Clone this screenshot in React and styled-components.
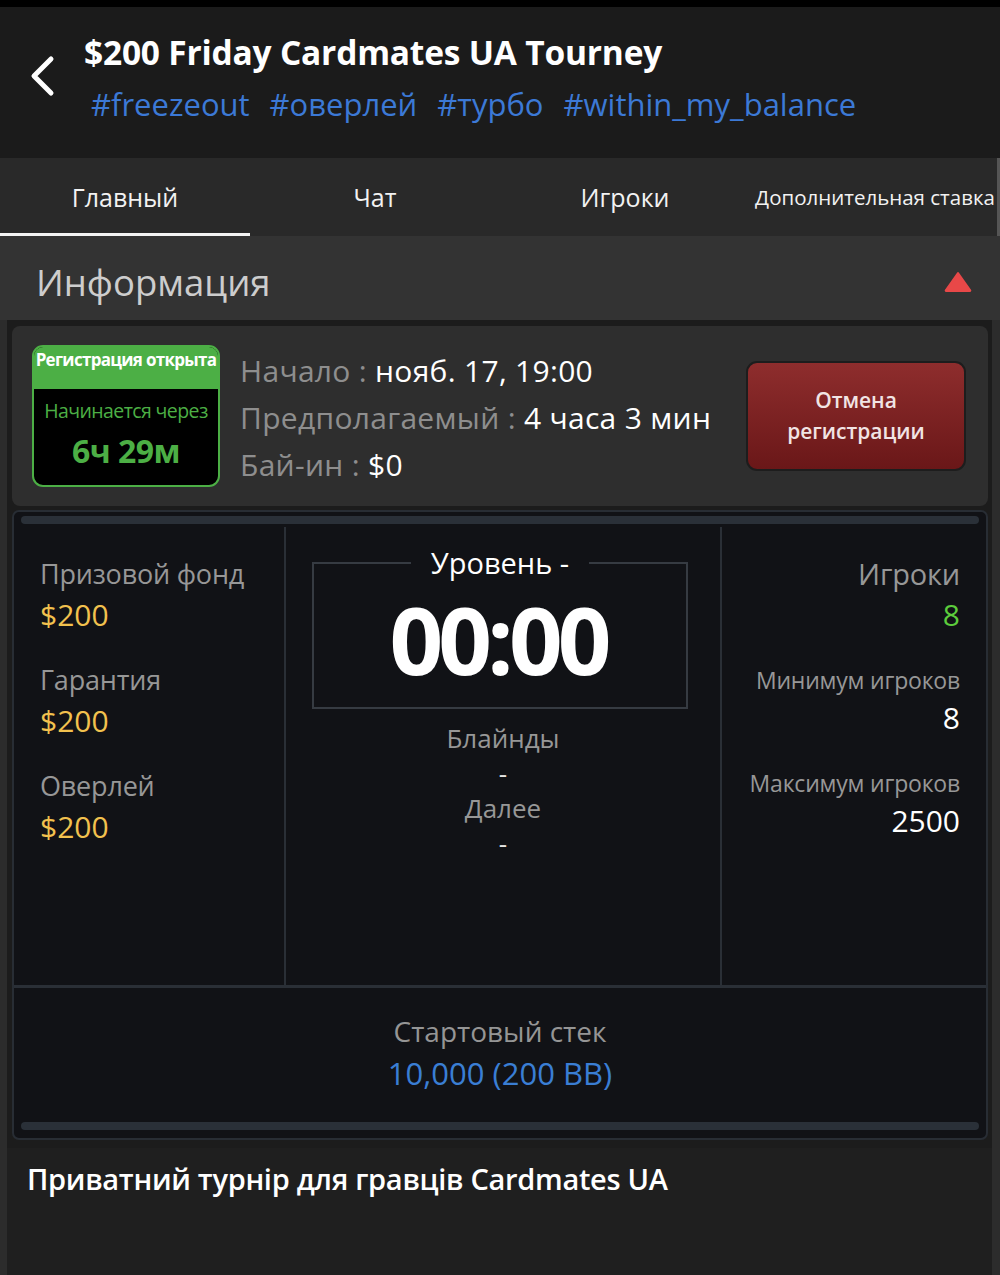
import React from "react";
import styled, { createGlobalStyle } from "styled-components";

const Global = createGlobalStyle`
  html, body {
    margin: 0;
    padding: 0;
    background: #2c2c2c;
  }
  body {
    font-family: "Open Sans", "Noto Sans", sans-serif;
    color: #fff;
  }
`

const Page = styled.div`
  width: 1000px;
  min-height: 1275px;
  background: #2c2c2c;
  display: flex;
  flex-direction: column;
`

const StatusStrip = styled.div`
  height: 7px;
  background: #000;
`

const Header = styled.header`
  height: 151px;
  background: #1b1b1b;
  display: flex;
  align-items: center;
  padding-left: 22px;
  box-sizing: border-box;
`

const Back = styled.button`
  width: 40px;
  height: 50px;
  background: none;
  border: none;
  padding: 0;
  margin-top: -14px;
  display: flex;
  align-items: center;
  justify-content: center;
`

const HeadText = styled.div`
  display: flex;
  flex-direction: column;
  margin-left: 22px;
  margin-top: -12px;
`

const Title = styled.h1`
  margin: 0;
  font-size: 33.5px;
  font-weight: 700;
  line-height: 44px;
  letter-spacing: -0.2px;
  color: #fff;
`

const Tags = styled.div`
  display: flex;
  gap: 20px;
  margin-left: 7px;
  margin-top: 10px;
`

const Tag = styled.span`
  font-size: 31px;
  line-height: 40px;
  color: #3c79d6;
`

const Tabs = styled.nav`
  height: 78px;
  background: #292929;
  display: grid;
  grid-template-columns: repeat(4, 250px);
  border-right: 3px solid #555;
  box-sizing: border-box;
`

const Tab = styled.div`
  display: flex;
  align-items: center;
  justify-content: center;
  font-size: ${p => (p.$small ? "20.5px" : "25px")};
  white-space: nowrap;
  color: #f2f2f2;
  border-bottom: 3px solid ${p => (p.$active ? "#f4f4f4" : "transparent")};
  padding-top: 2px;
`

const SectionHead = styled.div`
  height: 84px;
  box-sizing: border-box;
  background: #333;
  display: flex;
  align-items: center;
  justify-content: space-between;
  padding: 8px 28px 0 36px;
`

const SectionTitle = styled.h2`
  margin: 0;
  font-size: 36.5px;
  font-weight: 400;
  color: #cdcdcd;
`

const Body = styled.div`
  margin: 0 8px 0 7px;
  background: #1c1c1c;
  padding: 6px 4px 8px 5px;
  display: flex;
  flex-direction: column;
  gap: 4px;
  flex: 1;
`

const Card = styled.div`
  height: 180px;
  background: #2e2e2e;
  border-radius: 8px;
  display: flex;
  align-items: center;
  padding: 0 22px 0 20px;
`

const Badge = styled.div`
  width: 188px;
  height: 142px;
  box-sizing: border-box;
  border: 2px solid #4caf45;
  border-radius: 11px;
  overflow: hidden;
  background: #000;
  display: flex;
  flex-direction: column;
`

const BadgeTop = styled.div`
  height: 42px;
  background: #4caf45;
  font-size: 17px;
  font-weight: 700;
  color: #fff;
  text-align: center;
  line-height: 26px;
  letter-spacing: -0.7px;
  white-space: nowrap;
`

const BadgeSub = styled.div`
  font-size: 19.5px;
  color: #4caf45;
  text-align: center;
  margin-top: 8px;
  white-space: nowrap;
  letter-spacing: -0.6px;
`

const BadgeTime = styled.div`
  font-size: 32px;
  font-weight: 700;
  color: #4caf45;
  text-align: center;
  line-height: 42px;
  margin-top: 6px;
  letter-spacing: -0.5px;
`

const Facts = styled.div`
  flex: 1;
  display: flex;
  flex-direction: column;
  margin-left: 20px;
  margin-top: 2px;
`

const Fact = styled.div`
  font-size: 30px;
  line-height: 47px;
  color: #8e8e8e;
  white-space: nowrap;
  letter-spacing: 0.3px;
  span {
    color: #fff;
  }
`

const CancelButton = styled.button`
  width: 220px;
  height: 110px;
  border: 2px solid #1d1d1d;
  border-radius: 11px;
  background: linear-gradient(#8e2d2d, #6a1718);
  color: #f1e4e4;
  font-family: "Open Sans", "Noto Sans", sans-serif;
  font-size: 21px;
  font-weight: 600;
  line-height: 31px;
`

const Stats = styled.div`
  background: #111216;
  border: 2px solid #282d34;
  border-radius: 7px;
  padding: 4px 5px 8px;
  display: flex;
  flex-direction: column;
`

const Rail = styled.div`
  height: 8px;
  border-radius: 4px;
  background: #2a3038;
  margin: 0 2px;
`

const Grid = styled.div`
  display: grid;
  grid-template-columns: 270px 436px 1fr;
  height: 458px;
  margin: 3px -5px 0;
  border-bottom: 3px solid #2a2f36;
`

const Col = styled.div`
  display: flex;
  flex-direction: column;
  align-items: ${p => (p.$right ? "flex-end" : p.$center ? "center" : "flex-start")};
  padding: ${p => (p.$right ? "30px 26px 0 0" : p.$center ? "20px 0 0" : "30px 0 0 26px")};
  border-left: ${p => (p.$divided ? "2px solid #2a2f36" : "none")};
`

const Label = styled.div`
  font-size: ${p => p.$size || 27}px;
  line-height: 34px;
  color: #979797;
  letter-spacing: -0.2px;
  white-space: nowrap;
`

const Value = styled.div`
  font-size: 30px;
  line-height: 42px;
  color: ${p => p.$color || "#fff"};
  margin-top: ${p => p.$top || 0}px;
  margin-bottom: 27px;
`

const Level = styled.fieldset`
  width: 376px;
  height: 162px;
  box-sizing: border-box;
  border: 2px solid #363b42;
  margin: 0 0 0 -6px;
  padding: 0;
  display: flex;
  align-items: center;
  justify-content: center;
  legend {
    padding: 0 20px;
    margin: 0 auto;
    font-size: 29px;
    line-height: 32px;
    color: #fff;
  }
`

const Clock = styled.div`
  font-size: 94px;
  font-weight: 700;
  letter-spacing: -5px;
  line-height: 72px;
  color: #fff;
  margin-top: 24px;
  padding-right: 4px;
`

const Small = styled.div`
  font-size: 26px;
  line-height: 35px;
  color: ${p => (p.$dim ? "#979797" : "#e4e4e4")};
  margin-top: ${p => p.$top || 0}px;
`

const Starting = styled.div`
  height: 130px;
  display: flex;
  flex-direction: column;
  align-items: center;
  justify-content: center;
  padding-bottom: 4px;
`

const StackLabel = styled.div`
  font-size: 28px;
  line-height: 40px;
  color: #959595;
`

const StackValue = styled.div`
  font-size: 31px;
  line-height: 44px;
  color: #3a7ed4;
`

const Description = styled.div`
  margin: 4px -4px -8px -5px;
  background: #1f1f1f;
  flex: 1;
  padding: 11px 20px 0 20px;
  font-size: 29px;
  font-weight: 600;
  letter-spacing: -0.3px;
  color: #fff;
`

const Chevron = () => (
  <svg width="30" height="42" viewBox="0 0 30 42">
    <path d="M24 4 L7 21 L24 38" fill="none" stroke="#fff" strokeWidth="5" strokeLinecap="round" strokeLinejoin="round" />
  </svg>
)

const Caret = () => (
  <svg width="28" height="22" viewBox="0 0 28 22">
    <path d="M14 2 L26 19 Q27 20 25 20 L3 20 Q1 20 2 19 Z" fill="#e84848" stroke="#e84848" strokeWidth="2" strokeLinejoin="round" />
  </svg>
)

export default function App() {
  const tags = ["#freezeout", "#оверлей", "#турбо", "#within_my_balance"]
  const tabs = ["Главный", "Чат", "Игроки", "Дополнительная ставка"]
  return (
    <Page>
      <Global />
      <StatusStrip />
      <Header>
        <Back><Chevron /></Back>
        <HeadText>
          <Title>$200 Friday Cardmates UA Tourney</Title>
          <Tags>
            {tags.map(t => <Tag key={t}>{t}</Tag>)}
          </Tags>
        </HeadText>
      </Header>
      <Tabs>
        {tabs.map((t, i) => (
          <Tab key={t} $active={i === 0} $small={i === 3}>{t}</Tab>
        ))}
      </Tabs>
      <SectionHead>
        <SectionTitle>Информация</SectionTitle>
        <Caret />
      </SectionHead>
      <Body>
        <Card>
          <Badge>
            <BadgeTop>Регистрация открыта</BadgeTop>
            <BadgeSub>Начинается через</BadgeSub>
            <BadgeTime>6ч 29м</BadgeTime>
          </Badge>
          <Facts>
            <Fact>Начало : <span>нояб. 17, 19:00</span></Fact>
            <Fact>Предполагаемый : <span>4 часа 3 мин</span></Fact>
            <Fact>Бай-ин : <span>$0</span></Fact>
          </Facts>
          <CancelButton>Отмена<br />регистрации</CancelButton>
        </Card>
        <Stats>
          <Rail />
          <Grid>
            <Col>
              <Label>Призовой фонд</Label>
              <Value $color="#f2c14e" $top={3}>$200</Value>
              <Label>Гарантия</Label>
              <Value $color="#f2c14e" $top={3}>$200</Value>
              <Label>Оверлей</Label>
              <Value $color="#f2c14e" $top={3}>$200</Value>
            </Col>
            <Col $center $divided>
              <Level>
                <legend>Уровень -</legend>
                <Clock>00:00</Clock>
              </Level>
              <Small $dim $top={12}>Блайнды</Small>
              <Small>-</Small>
              <Small $dim>Далее</Small>
              <Small>-</Small>
            </Col>
            <Col $right $divided>
              <Label $size={29}>Игроки</Label>
              <Value $color="#5ccc3c" $top={3}>8</Value>
              <Label $size={23}>Минимум игроков</Label>
              <Value>8</Value>
              <Label $size={23}>Максимум игроков</Label>
              <Value>2500</Value>
            </Col>
          </Grid>
          <Starting>
            <StackLabel>Стартовый стек</StackLabel>
            <StackValue>10,000 (200 BB)</StackValue>
          </Starting>
          <Rail />
        </Stats>
        <Description>Приватний турнір для гравців Cardmates UA</Description>
      </Body>
    </Page>
  )
}
